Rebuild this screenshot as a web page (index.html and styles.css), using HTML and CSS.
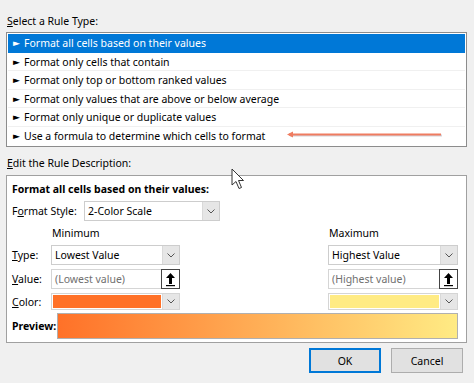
FILE: index.html
```html
<!DOCTYPE html>
<html>
<head>
<meta charset="utf-8">
<link rel="stylesheet" href="styles.css">
</head>
<body>
<div class="dialog">
  <div class="section-label"><u>S</u>elect a Rule Type:</div>
  <div class="listbox">
    <div class="row selected"><span class="bullet">►</span>Format all cells based on their values</div>
    <div class="row"><span class="bullet">►</span>Format only cells that contain</div>
    <div class="row"><span class="bullet">►</span>Format only top or bottom ranked values</div>
    <div class="row"><span class="bullet">►</span>Format only values that are above or below average</div>
    <div class="row"><span class="bullet">►</span>Format only unique or duplicate values</div>
    <div class="row last"><span class="bullet">►</span>Use a formula to determine which cells to format</div>
    <svg class="annot-arrow" width="160" height="10" viewBox="0 0 160 10">
      <line x1="4" y1="5.5" x2="156" y2="5.5" stroke="#b7b7c4" stroke-width="2" opacity="0.6"/>
      <line x1="3" y1="4.5" x2="155" y2="4.5" stroke="#ef7c60" stroke-width="2"/>
      <path d="M1 4.5 L7 1.5 L7 7.5 Z" fill="#ef7c60"/>
    </svg>
  </div>

  <div class="section-label second"><u>E</u>dit the Rule Description:</div>
  <div class="descbox">
    <div class="desc-title">Format all cells based on their values:</div>
    <div class="style-row">
      <span class="style-label">F<u>o</u>rmat Style:</span>
      <div class="combo style-combo"><span class="combo-text">2-Color Scale</span><span class="combo-btn"><svg width="8" height="5" viewBox="0 0 8 5"><path d="M0.5 0.5 L4 4 L7.5 0.5" fill="none" stroke="#555" stroke-width="1"/></svg></span></div>
    </div>
    <div class="grid">
      <span></span><span class="col-head">Minimum</span><span></span><span class="col-head">Maximum</span>

      <span class="lbl"><u>T</u>ype:</span>
      <div class="combo"><span class="combo-text">Lowest Value</span><span class="combo-btn"><svg width="8" height="5" viewBox="0 0 8 5"><path d="M0.5 0.5 L4 4 L7.5 0.5" fill="none" stroke="#555" stroke-width="1"/></svg></span></div>
      <span></span>
      <div class="combo"><span class="combo-text">Highest Value</span><span class="combo-btn"><svg width="8" height="5" viewBox="0 0 8 5"><path d="M0.5 0.5 L4 4 L7.5 0.5" fill="none" stroke="#555" stroke-width="1"/></svg></span></div>

      <span class="lbl"><u>V</u>alue:</span>
      <div class="input"><span class="placeholder">(Lowest value)</span><span class="ref-btn"><svg width="11" height="15" viewBox="0 0 11 15"><path d="M5.5 1 L1 6 H4 V12 H7 V6 H10 Z" fill="#000"/><rect x="1" y="13" width="9" height="1.2" fill="#000"/></svg></span></div>
      <span></span>
      <div class="input"><span class="placeholder">(Highest value)</span><span class="ref-btn"><svg width="11" height="15" viewBox="0 0 11 15"><path d="M5.5 1 L1 6 H4 V12 H7 V6 H10 Z" fill="#000"/><rect x="1" y="13" width="9" height="1.2" fill="#000"/></svg></span></div>

      <span class="lbl"><u>C</u>olor:</span>
      <div class="combo color-combo"><span class="swatch orange"></span><span class="combo-btn"><svg width="8" height="5" viewBox="0 0 8 5"><path d="M0.5 0.5 L4 4 L7.5 0.5" fill="none" stroke="#555" stroke-width="1"/></svg></span></div>
      <span></span>
      <div class="combo color-combo"><span class="swatch yellow"></span><span class="combo-btn"><svg width="8" height="5" viewBox="0 0 8 5"><path d="M0.5 0.5 L4 4 L7.5 0.5" fill="none" stroke="#555" stroke-width="1"/></svg></span></div>
    </div>
    <div class="preview-row">
      <span class="preview-label">Preview:</span>
      <div class="preview-bar"></div>
    </div>
  </div>

  <div class="buttons">
    <button class="btn default">OK</button>
    <button class="btn">Cancel</button>
  </div>

  <svg class="cursor" width="16" height="24" viewBox="0 0 16 24">
    <path d="M1 1 L1 17 L5 13.5 L8 20.5 L10.5 19.5 L7.5 12.5 L12.5 12.5 Z" fill="#fff" stroke="#333" stroke-width="1" stroke-linejoin="round"/>
  </svg>
</div>
</body>
</html>
```

FILE: styles.css
```css
* { box-sizing: border-box; }
html, body { margin: 0; padding: 0; }
body {
  background: #f0f0f0;
  font-family: "Noto Sans", "Open Sans", sans-serif;
  font-size: 10.5px;
  color: #000;
  width: 474px;
  height: 383px;
  overflow: hidden;
}
.dialog {
  position: relative;
  padding: 13px 7px 0 6px;
  height: 383px;
}
.section-label {
  padding-left: 1px;
  height: 16px;
  line-height: 16px;
  margin-bottom: 3px;
}
.section-label.second {
  margin-top: 8px;
  margin-bottom: 4px;
}
.listbox {
  position: relative;
  width: 461px;
  height: 115px;
  background: #fff;
  border: 1px solid #8c8c8c;
  padding: 1px 1px 0 1px;
}
.row {
  height: 18.6px;
  line-height: 18px;
  padding-left: 5px;
  border-bottom: 1px solid #f0f0f0;
  white-space: nowrap;
}
.row.last { border-bottom: none; }
.row.selected {
  background: #0078d7;
  color: #fff;
  border-bottom-color: #0078d7;
}
.bullet {
  display: inline-block;
  width: 11px;
  font-size: 9px;
  vertical-align: 1px;
  font-family: "DejaVu Sans", sans-serif;
}
.annot-arrow {
  position: absolute;
  left: 279px;
  top: 97px;
}
.descbox {
  width: 461px;
  height: 168px;
  background: #fff;
  border: 1px solid #a0a0a0;
  padding: 5px 8px 0 5px;
}
.desc-title {
  font-weight: bold;
  height: 16px;
  line-height: 16px;
}
.style-row {
  display: flex;
  align-items: center;
  margin-top: 4px;
  height: 20px;
}
.style-label { width: 72px; }
.combo {
  display: flex;
  height: 20px;
  border: 1px solid #cdcdcd;
  background: #fff;
}
.style-combo { width: 136px; }
.combo-text {
  flex: 1;
  padding-left: 3px;
  line-height: 18px;
  white-space: nowrap;
}
.combo-btn {
  width: 17px;
  background: #e6e6e6;
  border-left: 1px solid #d9d9d9;
  display: flex;
  align-items: center;
  justify-content: center;
}
.grid {
  display: grid;
  grid-template-columns: 39px 129px 1fr 130px;
  grid-template-rows: 16px 20px 20px 17px;
  row-gap: 4px;
  margin-top: 4px;
  align-items: center;
}
.col-head { line-height: 16px; padding-left: 1px; }
.lbl { line-height: 18px; }
.input {
  display: flex;
  height: 20px;
  border: 1px solid #d5d5d5;
  background: #fff;
}
.placeholder {
  flex: 1;
  padding-left: 3px;
  line-height: 18px;
  color: #707070;
  white-space: nowrap;
}
.ref-btn {
  width: 19px;
  margin: -1px -1px -1px 0;
  border: 1px solid #444;
  background: #fff;
  display: flex;
  align-items: center;
  justify-content: center;
}
.color-combo {
  height: 17px;
  padding: 1px 0 0 1px;
  border-color: #d5d5d5;
}
.swatch { flex: 1; margin-bottom: 1px; margin-right: 1px; }
.swatch.orange { background: #ff7128; }
.swatch.yellow { background: #ffeb84; }
.color-combo .combo-btn { margin-top: -1px; }
.preview-row {
  display: flex;
  align-items: center;
  margin-top: 3px;
  height: 26px;
}
.preview-label {
  font-weight: bold;
  width: 45px;
}
.preview-bar {
  flex: 1;
  height: 26px;
  border: 1px solid #b0b0b0;
  background: linear-gradient(to right, #ff7128, #ffeb84);
}
.buttons {
  display: flex;
  justify-content: flex-end;
  gap: 10px;
  margin-top: 5px;
  padding-right: 4px;
}
.btn {
  width: 72px;
  height: 25px;
  background: #e1e1e1;
  border: 1px solid #adadad;
  font-family: "Noto Sans", "Open Sans", sans-serif;
  font-size: 10.5px;
  color: #000;
  padding: 0;
}
.btn.default {
  border: 2px solid #0078d7;
}
.cursor {
  position: absolute;
  left: 231px;
  top: 168px;
}
```
